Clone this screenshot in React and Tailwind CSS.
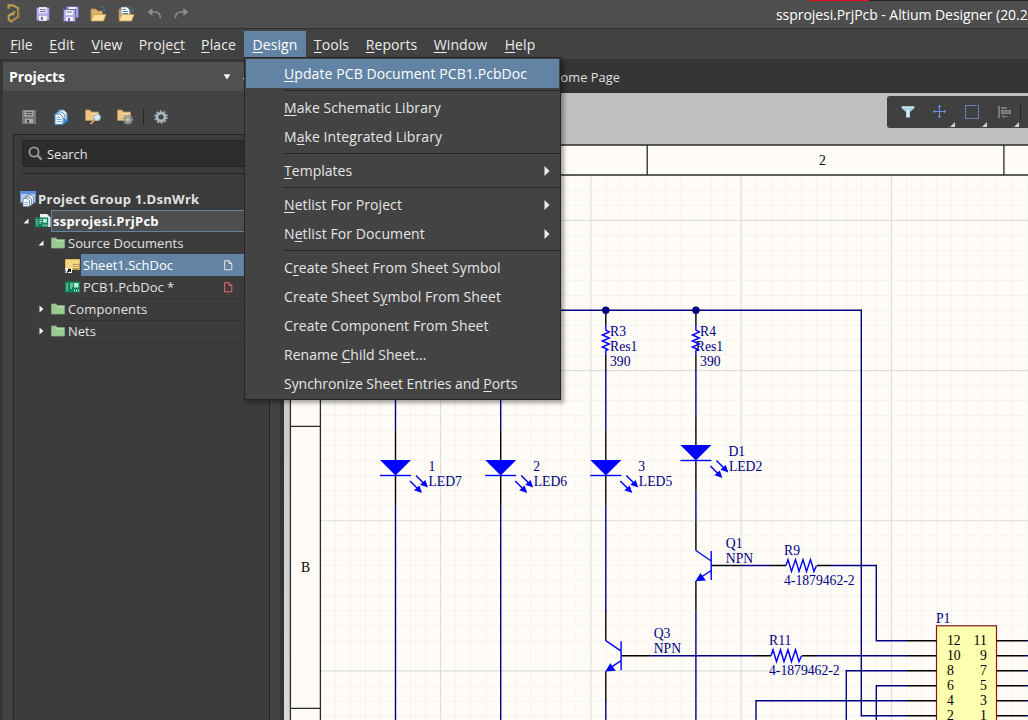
import React from "react";

const NAVY = "#000080";
const BLUE = "#0000ff";

/* A label with its keyboard mnemonic written as &X */
function Mnemonic({ text }) {
  const i = text.indexOf("&");
  if (i < 0) return text;
  return (
    <>
      {text.slice(0, i)}
      <span className="underline decoration-1 underline-offset-[2px]">{text[i + 1]}</span>
      {text.slice(i + 2)}
    </>
  );
}

function Floppy({ body, edge, className }) {
  return (
    <svg width="14" height="14" viewBox="0 0 14 14" className={className}>
      <rect x="0" y="0" width="14" height="14" fill={edge} />
      <rect x="1" y="1" width="12" height="12" fill={body} />
      <rect x="3" y="0" width="8" height="6" fill="#f2f2f6" />
      <rect x="4" y="2" width="6" height="1" fill={edge} />
      <rect x="4" y="4" width="6" height="1" fill={edge} />
      <rect x="3" y="9" width="8" height="5" fill="#f2f2f6" />
      <rect x="5" y="10" width="2" height="3" fill={edge} />
    </svg>
  );
}

function AltiumLogo() {
  return (
    <svg width="16" height="20" viewBox="0 0 16 20" fill="none">
      <path d="M2.6 4.6 V1.2 H7.4 L12.4 4.2 V13 L5.4 17.6 L2.8 15.8 V11.6 L9.4 7.6" stroke="#bb9b4e" strokeWidth="2.2" />
      <path d="M12.8 4.4 V13 L6 17.8" stroke="#8f7841" strokeWidth="1" />
      <path d="M3 10.6 H8.6" stroke="#bb9b4e" strokeWidth="1.6" />
    </svg>
  );
}

function SaveAll() {
  return (
    <svg width="16" height="16" viewBox="0 0 16 16">
      <rect x="3" y="0" width="13" height="12" fill="#6a66a4" />
      <rect x="4" y="1" width="11" height="10" fill="#a9a3dc" />
      <rect x="6" y="1" width="7" height="3" fill="#f2f2f6" />
      <rect x="0" y="3" width="13" height="13" fill="#6a66a4" />
      <rect x="1" y="4" width="11" height="11" fill="#b7b0e6" />
      <rect x="3" y="4" width="7" height="5" fill="#f2f2f6" />
      <rect x="4" y="5.5" width="5" height="1" fill="#6a66a4" />
      <rect x="3" y="11" width="7" height="4" fill="#f2f2f6" />
      <rect x="5" y="12" width="2" height="3" fill="#6a66a4" />
    </svg>
  );
}

function OpenFolder({ doc }) {
  return (
    <svg width="17" height="16" viewBox="0 0 17 16">
      <path d="M1 14 V3 H6 L7.5 5 H12.5 V9" fill="#d9b572" stroke="#a8813f" strokeWidth="0.8" />
      {doc && (
        <g>
          <path d="M3 10 V1 H9 L11.5 3.5 V10 Z" fill="#f4f7fb" stroke="#5d7ea6" strokeWidth="0.7" />
          <path d="M4.5 3.5 H8 M4.5 5.5 H10 M4.5 7.5 H10" stroke="#5d7ea6" strokeWidth="1" />
        </g>
      )}
      <path d="M1 15 L4 8.5 H16 L13.5 15 Z" fill="#fbdf9f" stroke="#c79a4d" strokeWidth="0.8" />
      <path d="M9.5 1.2 Q13 0 14.8 4" fill="none" stroke="#3f7196" strokeWidth="1.2" strokeDasharray="2.4 0.8" />
      <path d="M12.4 3.5 H16.6 L14.8 6 Z" fill="#3f7196" />
    </svg>
  );
}

function Undo({ className }) {
  return (
    <svg width="15" height="11" viewBox="0 0 15 11" className={className}>
      <path d="M5.5 0 V8 L0.5 4 Z" fill="#8b8b8b" />
      <path d="M4 4 H9 Q13.5 4.5 13.5 10" fill="none" stroke="#8b8b8b" strokeWidth="1.6" />
    </svg>
  );
}

function Gear({ size, className }) {
  return (
    <svg width={size} height={size} viewBox="0 0 14 14" className={className}>
      <circle cx="7" cy="7" r="5.9" fill="none" stroke="#9aa8b0" strokeWidth="1.8" strokeDasharray="2 1.7" />
      <circle cx="7" cy="7" r="3.9" fill="none" stroke="#a9b6bd" strokeWidth="2.8" />
      <circle cx="7" cy="7" r="2.2" fill="#434343" />
    </svg>
  );
}

function CopyDocs() {
  return (
    <svg width="15" height="16" viewBox="0 0 15 16">
      <path d="M5 1 H10 L13 4 V12 H5 Z" fill="#e8f2fb" stroke="#4f8fc6" />
      <path d="M3 3 H8 L11 6 V14 H3 Z" fill="#e8f2fb" stroke="#4f8fc6" />
      <path d="M1 5 H6 L9 8 V15.3 H1 Z" fill="#f5f9fd" stroke="#4f8fc6" />
      <path d="M2.5 8.5 H6 M2.5 10.5 H7.5 M2.5 12.5 H7.5" stroke="#78aee0" />
      <path d="M9.5 9 L14 12 L9.5 15.5 Z" fill="#2f87d8" />
    </svg>
  );
}

function ToolFolder({ gear }) {
  return (
    <svg width="17" height="16" viewBox="0 0 17 16">
      <path d="M0.5 11.5 V1 H5 L6.5 3 H13.5 V11.5 Z" fill="#eac583" stroke="#b8904e" strokeWidth="0.9" />
      <path d="M6 4.5 H13" stroke="#fbe3b4" />
      {gear ? (
        <g>
          <circle cx="10.8" cy="10.6" r="4.3" fill="none" stroke="#8d9ba3" strokeWidth="1.6" strokeDasharray="1.8 1" />
          <circle cx="10.8" cy="10.6" r="2.8" fill="#d8bc86" stroke="#8d9ba3" strokeWidth="1.8" />
        </g>
      ) : (
        <g>
          <path d="M9.8 10.5 L5.5 15" stroke="#c99a5a" strokeWidth="2" />
          <circle cx="12.2" cy="8.4" r="3.2" fill="#d7ebf7" stroke="#9ab7cb" strokeWidth="1" />
        </g>
      )}
    </svg>
  );
}

function Folder() {
  return (
    <svg width="14" height="12" viewBox="0 0 14 12" className="shrink-0">
      <path d="M0.5 11 V1 H5 L6.5 2.5 H13.5 V11 Z" fill="#9ccc94" stroke="#7fae78" strokeWidth="0.8" />
      <path d="M6 3.8 H13" stroke="#c0e2b8" />
    </svg>
  );
}

function Board({ page }) {
  return (
    <svg width="16" height="14" viewBox="0 0 16 14" className="shrink-0">
      {page && <path d="M5 0 H12 L15.5 3.5 V13 H5 Z" fill="#eceef6" />}
      <g transform={page ? "translate(0 3.5) scale(0.88)" : "translate(0 1.5)"}>
        <rect width="15" height="11" fill="#0b8457" />
        <path d="M1.5 2.5 H3 M1.5 4.5 H3 M1.5 6.5 H3 M1.5 8.5 H3 M5 2.5 H8 M5 4.5 H8 M5 6.5 H7" stroke="#d6f2e2" />
        <rect x="9" y="1.5" width="4.5" height="4.5" fill="#c4ead6" />
        <path d="M9.5 8 V10 M11.5 8 V10 M13.5 8 V10" stroke="#d6f2e2" />
      </g>
    </svg>
  );
}

function GroupIcon() {
  return (
    <svg width="17" height="16" viewBox="0 0 17 16" className="shrink-0">
      <rect x="0.5" y="0.5" width="15" height="11" fill="#b7cbe6" stroke="#5f84bb" />
      <rect x="0" y="0" width="16" height="3" fill="#5d8fe0" />
      <path d="M7 4 H11 L13.5 6 V13 H7 Z" fill="#e8edf5" stroke="#637a9c" strokeWidth="0.8" />
      <path d="M5 6 H9 L11.5 8 V14.5 H5 Z" fill="#eef2f8" stroke="#637a9c" strokeWidth="0.8" />
      <path d="M3 7.5 H7 L9.5 9.5 V15.5 H3 Z" fill="#f5f8fc" stroke="#637a9c" strokeWidth="0.8" />
      <path d="M4.5 11.5 H8 M4.5 13.5 H8" stroke="#7d95b5" strokeWidth="0.8" />
    </svg>
  );
}

function SheetIcon() {
  return (
    <svg width="16" height="16" viewBox="0 0 16 16" className="shrink-0">
      <rect x="0.5" y="2.5" width="14" height="10" fill="#f3d583" stroke="#dcb55c" />
      <rect x="8" y="7" width="7" height="6" fill="#b89548" />
      <path d="M8.5 8.5 H14 M8.5 10.5 H14" stroke="#fbe9b8" />
      <rect x="0.5" y="11" width="6.5" height="6" fill="#fff" />
      <path d="M2 15.5 L4.6 12.9 M3 12.5 H5.3 V15" stroke="#000" strokeWidth="1.3" fill="none" />
    </svg>
  );
}

function PageMark({ className }) {
  return (
    <svg width="9" height="11" viewBox="0 0 9 11" className={className}>
      <path d="M0.7 0.7 H5 L7.8 3.5 V9.8 H0.7 Z M5 0.7 V3.5 H7.8" fill="none" stroke="currentColor" strokeWidth="1" />
    </svg>
  );
}

function Expander({ open }) {
  return (
    <svg width="6" height="8" viewBox="0 0 6 8" className="shrink-0">
      {open ? <path d="M5.5 1.5 V6.5 H0.5 Z" fill="#f2f2f2" /> : <path d="M1.5 0.5 L5.5 4 L1.5 7.5 Z" fill="#f2f2f2" />}
    </svg>
  );
}

const designMenu = [
  { label: "&Update PCB Document PCB1.PcbDoc", active: true, fit: "tracking-[0.09px]" },
  null,
  { label: "&Make Schematic Library", fit: "tracking-[0.07px]" },
  { label: "M&ake Integrated Library", fit: "tracking-[0.07px]" },
  null,
  { label: "&Templates", sub: true, fit: "tracking-[0.03px]" },
  null,
  { label: "&Netlist For Project", sub: true, fit: "tracking-[0.08px]" },
  { label: "N&etlist For Document", sub: true, fit: "tracking-[0.09px]" },
  null,
  { label: "C&reate Sheet From Sheet Symbol", fit: "tracking-[0.09px]" },
  { label: "Create Sheet S&ymbol From Sheet", fit: "tracking-[0.1px]" },
  { label: "Create Component From Sheet", fit: "tracking-[0.08px]" },
  { label: "Rename &Child Sheet...", fit: "tracking-[0.02px]" },
  { label: "Synchronize Sheet Entries and &Ports", fit: "tracking-[-0.05px]" },
];

function DesignMenu() {
  return (
    <div className="absolute left-0 top-[26px] z-20 w-[317px] border border-[#252525] bg-[#434343] pb-px shadow-[3px_3px_4px_rgba(0,0,0,0.35)]">
      {designMenu.map((item, i) =>
        item ? (
          <div
            key={i}
            className={
              "ml-px mr-px flex h-[29px] items-center pl-[38px] pr-[9px] whitespace-nowrap " +
              (item.active ? "mt-px bg-[#6283a3] text-white" : "text-[#e6e6e6]")
            }
          >
            <span className={"grow " + item.fit}>
              <Mnemonic text={item.label} />
            </span>
            {item.sub && (
              <svg width="6" height="10" viewBox="0 0 6 10">
                <path d="M0.5 0 L5.5 5 L0.5 10 Z" fill="#ececec" />
              </svg>
            )}
          </div>
        ) : (
          <div key={i} className="ml-[39px] flex h-[5px] items-center">
            <div className="h-px w-full bg-[#232323]" />
          </div>
        )
      )}
    </div>
  );
}

const menus = [
  ["&File", "w-[39px]"],
  ["&Edit", "w-[42px]"],
  ["&View", "w-[48px]"],
  ["Proje&ct", "w-[62px]"],
  ["&Place", "w-[51px]"],
  ["&Design", "w-[62px]"],
  ["&Tools", "w-[51px]"],
  ["&Reports", "w-[69px]"],
  ["&Window", "w-[69px]"],
  ["&Help", "w-[50px]"],
];

function TitleBar() {
  return (
    <header className="flex h-[29px] shrink-0 items-center border-b border-[#2f2f2f] bg-[#4e4e4e] pl-[6px]">
      <AltiumLogo />
      <Floppy body="#b7b0e6" edge="#6a66a4" className="ml-[14px]" />
      <div className="ml-[13px]"><SaveAll /></div>
      <div className="ml-[11px]"><OpenFolder /></div>
      <div className="ml-[11px]"><OpenFolder doc /></div>
      <Undo className="ml-[12px] mt-[-2px]" />
      <Undo className="ml-[13px] mt-[-2px] -scale-x-100" />
      <div className="ml-[587px] h-full w-[252px] shrink-0 overflow-hidden">
        <div className="flex h-px">
          <div className="ml-[33px] w-[60px] bg-[#e81123]" />
          <div className="grow bg-[#262626]" />
        </div>
        <div className="flex h-[28px] items-center whitespace-nowrap text-[14px] tracking-[-0.06px] text-white">
          ssprojesi.PrjPcb - Altium Designer (20.2
        </div>
      </div>
    </header>
  );
}

function MenuBar() {
  return (
    <nav className="flex h-[30px] shrink-0 items-start bg-[#424242] pl-[2px] pt-[2px] text-[14px] text-[#ececec]">
      {menus.map(([label, width]) => {
        const open = label === "&Design";
        return (
          <div key={label} className={width + " relative h-[26px] " + (open ? "bg-[#6283a3] text-white" : "")}>
            <div className="flex h-[27px] items-center justify-center">
              <span className="tracking-[0.1px]">
                <Mnemonic text={label} />
              </span>
            </div>
            {open && <DesignMenu />}
          </div>
        );
      })}
    </nav>
  );
}

function ProjectsPanel() {
  return (
    <aside className="ml-[3px] flex w-[277px] shrink-0 flex-col bg-[#434343]">
      <div className="flex h-[29px] shrink-0 items-center bg-[#505050] pl-[6px]">
        <span className="w-[214px] pt-px text-[14px] font-bold tracking-[-0.08px] text-white">Projects</span>
        <svg width="8" height="6" viewBox="0 0 8 6">
          <path d="M0.5 0.3 H7.5 L4 5.5 Z" fill="#f4f4f4" />
        </svg>
        <span className="ml-[12px] mt-[3px] h-px w-[10px] bg-[#e5e5e5]" />
      </div>
      <div className="flex h-[43px] shrink-0 items-center pl-[19px] pt-[9px]">
        <svg width="14" height="14" viewBox="0 0 14 14">
          <rect width="14" height="14" fill="#8a8a8a" />
          <path d="M0 0 H2 V7 H12 V0 H14 V14 H0 Z" fill="#777" />
          <rect x="3" y="1" width="8" height="5" fill="#a6a6a6" />
          <path d="M4 2.5 H10 M4 4.5 H10" stroke="#555" />
          <rect x="3" y="9" width="8" height="4" fill="#aaa" />
          <rect x="5" y="10" width="2" height="3" fill="#444" />
        </svg>
        <div className="ml-[18px]"><CopyDocs /></div>
        <div className="ml-[16px]"><ToolFolder /></div>
        <div className="ml-[15px]"><ToolFolder gear /></div>
        <div className="ml-[9px] h-[16px] w-px bg-[#262626]" />
        <Gear size={14} className="ml-[10px]" />
      </div>
      <div className="ml-[10px] flex w-[257px] grow flex-col border-l border-r border-t border-[#252525] bg-[#3c3c3c]">
        <div className="ml-[8px] mt-[5px] flex h-[27px] items-center rounded-[3px] border border-[#242424] bg-[#2d2d2d] pl-[5px]">
          <svg width="15" height="15" viewBox="0 0 15 15">
            <circle cx="6" cy="6" r="4.6" fill="none" stroke="#9a9a9a" strokeWidth="1.8" />
            <path d="M9.3 9.3 L13.6 13.6" stroke="#9a9a9a" strokeWidth="2.2" />
          </svg>
          <span className="ml-[4px] pt-px text-[12.8px] text-[#e8e8e8]">Search</span>
        </div>
        <div className="ml-[8px] mt-[6px] h-px bg-[#242424]" />
        <div className="mt-[14px] text-[13px] text-[#e2e2e2]">
          <div className="flex h-[22px] items-center pl-[6px] font-bold">
            <GroupIcon />
            <span className="ml-px tracking-[0.28px]">Project Group 1.DsnWrk</span>
          </div>
          <div className="flex h-[22px] items-center pl-[9px] font-bold text-white">
            <Expander open />
            <div className="ml-[6px]"><Board page /></div>
            <div className="flex h-[22px] grow items-center border border-r-0 border-[#6283a3] bg-[#4e4e4e] pl-px">
              <span className="tracking-[0.24px]">ssprojesi.PrjPcb</span>
            </div>
          </div>
          <div className="flex h-[22px] items-center pl-[24px]">
            <Expander open />
            <div className="ml-[7px]"><Folder /></div>
            <span className="ml-[3px] tracking-[0.04px]">Source Documents</span>
          </div>
          <div className="flex h-[22px] items-center pl-[51px]">
            <SheetIcon />
            <div className="flex h-[22px] grow items-center bg-[#6283a3] pl-[2px] text-white">
              <span className="w-[141px]">Sheet1.SchDoc</span>
              <PageMark className="text-[#e8e8e8]" />
            </div>
          </div>
          <div className="flex h-[22px] items-center pl-[51px]">
            <Board />
            <div className="flex h-[22px] grow items-center pl-[2px] shadow-[0_1px_0_#343434]">
              <span className="w-[141px]">PCB1.PcbDoc *</span>
              <PageMark className="text-[#f06a6a]" />
            </div>
          </div>
          <div className="flex h-[22px] items-center pl-[24px]">
            <Expander />
            <div className="ml-[7px]"><Folder /></div>
            <div className="ml-[3px] flex h-[22px] grow items-center shadow-[0_1px_0_#343434]">
              <span className="tracking-[0.14px]">Components</span>
            </div>
          </div>
          <div className="flex h-[22px] items-center pl-[24px]">
            <Expander />
            <div className="ml-[7px]"><Folder /></div>
            <div className="ml-[3px] flex h-[22px] grow items-center shadow-[0_1px_0_#343434]">
              <span>Nets</span>
            </div>
          </div>
        </div>
      </div>
    </aside>
  );
}

/* Light emitting diode: x is the wire, y the cathode bar */
function Led({ x, y, name, type, dx = 32.5 }) {
  return (
    <g>
      <path d={`M${x} ${y - 45} V${y - 14} M${x} ${y} V${y + 30}`} stroke="#000" />
      <path d={`M${x - 15.5} ${y - 15.5} H${x + 15.5} L${x} ${y} Z`} fill={BLUE} />
      <path d={`M${x - 15.5} ${y} H${x + 15.5}`} stroke={BLUE} />
      {[[14.5, 5.5], [20.5, 0]].map(([ax, ay]) => (
        <g key={ax} transform={`translate(${x + ax} ${y + ay})`}>
          <path d="M0 0 L8 8" stroke={BLUE} strokeWidth="1.5" />
          <path d="M12 12 L4 9.2 L9.4 4.4 Z" fill={BLUE} />
        </g>
      ))}
      <Label x={x + dx} y={y - 5} text={name} />
      <Label x={x + 33} y={y + 10.5} text={type} />
    </g>
  );
}

function Label({ x, y, text, color = NAVY, anchor = "start" }) {
  return (
    <text x={x} y={y} fill={color} stroke="none" textAnchor={anchor} className="font-['Liberation_Serif',serif] text-[13.7px]">
      {text}
    </text>
  );
}

function Npn({ x, y, name, lx }) {
  return (
    <g>
      <path d={`M${x} ${y - 45} V${y - 15} M${x} ${y + 15.5} V${y + 46} M${x + 15.5} ${y} H${x + 45}`} stroke="#000" />
      <path d={`M${x} ${y - 15} L${x + 15.3} ${y - 4.5} M${x + 15.3} ${y - 14.5} V${y + 14.5} M${x + 15.3} ${y + 5} L${x + 4} ${y + 12.5}`} stroke={BLUE} />
      <path d={`M${x - 0.5} ${y + 15.8} L${x + 4.5} ${y + 7.5} L${x + 10} ${y + 15} Z`} fill={BLUE} />
      <Label x={lx} y={y - 17.5} text={name} />
      <Label x={lx} y={y - 2.5} text="NPN" />
    </g>
  );
}

function ResV({ x, name, tx }) {
  return (
    <g>
      <path d={`M${x} 310 V325 M${x} 355 V370`} stroke="#000" />
      <path
        d={`M${x} 325 V330 L${x + 3.5} 332 L${x - 3.5} 335 L${x + 3.5} 338 L${x - 3.5} 341 L${x + 3.5} 344 L${x - 3.5} 347 L${x + 2} 349.5 L${x} 350.5 V355`}
        stroke={BLUE}
      />
      <circle cx={x} cy="310.3" r="3.7" fill={NAVY} />
      <Label x={x + 4.2} y="336" text={name} />
      <Label x={tx} y="351" text="Res1" />
      <Label x={x + 4.2} y="366" text="390" />
    </g>
  );
}

function ResH({ x, y, name }) {
  return (
    <g>
      <path d={`M${x - 15} ${y} H${x} M${x + 31} ${y} H${x + 45}`} stroke="#000" />
      <path
        d={`M${x} ${y} L${x + 2} ${y - 6} L${x + 5.5} ${y + 6} L${x + 9.5} ${y - 6} L${x + 13} ${y + 6} L${x + 17} ${y - 6} L${x + 20.5} ${y + 6} L${x + 24.5} ${y - 6} L${x + 28} ${y + 6} L${x + 30.5} ${y}`}
        stroke={BLUE}
      />
      <Label x={x - 2} y={y - 10.5} text={name} />
      <Label x={x - 2} y={y + 19.5} text="4-1879462-2" />
    </g>
  );
}

const rows = [640.7, 655.7, 670.7, 685.7, 700.7, 715.7];
const minor = Array.from({ length: 50 }, (_, i) => i);

function Schematic() {
  return (
    <svg width="744" height="627" viewBox="284 93 744 627" fill="none" strokeWidth="1.4" className="block">
      <rect x="290" y="145" width="740" height="580" fill="#fffcf7" />
      <g>
        {minor.map((i) => (
          <path key={i} d={`M${335.4 + i * 15.03} 176 V720`} stroke={(i - 7) % 10 === 0 ? "#dcdedb" : "#f3f3f1"} strokeWidth={(i - 7) % 10 === 0 ? 1.2 : 1} />
        ))}
        {minor.map((i) => (
          <path key={i} d={`M321 ${190.3 + i * 15.02} H1028`} stroke={(i - 2) % 10 === 0 ? "#dcdedb" : "#f3f3f1"} strokeWidth={(i - 2) % 10 === 0 ? 1.2 : 1} />
        ))}
      </g>
      <g stroke="#2a2a2a" strokeWidth="1.3">
        <path d="M290.4 720 V145 H1028 M320.4 720 V175 H1028" />
        <path d="M647.2 145 V175 M1003.9 145 V175 M290 426.4 H320.4 M290 708.4 H320.4" />
      </g>
      <Label x="822.5" y="165" text="2" color="#000" anchor="middle" />
      <Label x="305.5" y="571.5" text="B" color="#000" anchor="middle" />

      {/* wires stop where component leads and bodies begin */}
      <g stroke={NAVY}>
        <path d="M395.5 390 V430.5 M395.5 505.5 V720 M500.7 390 V430.5 M500.7 505.5 V720" />
        <path d="M605.8 370 V430.5 M605.8 505.5 V611 M605.8 701.5 V720" />
        <path d="M695.9 370 V415.5 M695.9 490.5 V520.5 M695.9 611.5 V720" />
        <path d="M500 310.3 H861.3 V715.7 H907" />
        <path d="M741 565.5 H771 M831 565.5 H876.3 V640.7 H907" />
        <path d="M651 655.7 H756 M816 655.7 H907" />
        <path d="M846.3 720 V670.7 H907 M876.3 720 V685.7 H907 M756 720 V700.7 H907" />
      </g>
      <ResV x={605.8} name="R3" tx={610} />
      <ResV x={695.9} name="R4" tx={695.8} />
      <Led x={395.5} y={475.5} name="1" type="LED7" dx={33} />
      <Led x={500.7} y={475.5} name="2" type="LED6" />
      <Led x={605.8} y={475.5} name="3" type="LED5" />
      <Led x={695.9} y={460.5} name="D1" type="LED2" />
      <Npn x={695.9} y={565.5} name="Q1" lx={725.8} />
      <Npn x={605.8} y={655.7} name="Q3" lx={653.7} />
      <ResH x={786} y={565.5} name="R9" />
      <ResH x={771} y={655.7} name="R11" />

      <rect x="936.5" y="625.8" width="60" height="110" fill="#ffffb0" stroke="#8a1414" strokeWidth="1.2" />
      <Label x="936" y="622.5" text="P1" />
      {rows.map((y, i) => (
        <g key={y}>
          <path d={`M907 ${y} H936.5 M996.5 ${y} H1026`} stroke="#000" />
          <path d={`M1026 ${y} H1028`} stroke={NAVY} />
          <Label x="947" y={y + 4.5} text={String(12 - i * 2)} color="#000" />
          <Label x="986.8" y={y + 4.5} text={String(11 - i * 2)} color="#000" anchor="end" />
        </g>
      ))}
    </svg>
  );
}

function Corner() {
  return (
    <svg width="5" height="5" viewBox="0 0 5 5" className="absolute bottom-[1px] right-[1px]">
      <path d="M5 0 V5 H0 Z" fill="#d4d4d4" />
    </svg>
  );
}

function ActiveBar() {
  return (
    <div className="absolute right-0 top-[3px] flex h-[32px] w-[141px] items-center rounded-l-[3px] bg-[#404040]">
      <div className="ml-[8px] flex h-[32px] w-[29px] items-center justify-center">
        <svg width="14" height="12" viewBox="0 0 14 12" className="ml-[-4px]">
          <path d="M0.5 0.5 H13.5 V2 L9 6 V11.5 H5 V6 L0.5 2 Z" fill="#a8d4e6" />
          <path d="M1 1 H13" stroke="#dff2f9" />
          <path d="M7 3 V11" stroke="#e6f6fb" strokeWidth="1.4" />
        </svg>
      </div>
      <div className="relative flex h-[32px] w-[32px] items-center justify-center">
        <svg width="14" height="14" viewBox="0 0 14 14" stroke="#6d8fe0" fill="none">
          <path d="M6.5 0 V13 M0 6.5 H13 M5 1.5 H8 M5 11.5 H8 M1.5 5 V8 M11.5 5 V8" />
        </svg>
        <Corner />
      </div>
      <div className="relative flex h-[32px] w-[32px] items-center justify-center">
        <svg width="14" height="14" viewBox="0 0 14 14">
          <rect x="0.5" y="0.5" width="13" height="13" fill="none" stroke="#7b9bf0" strokeDasharray="2 1" />
        </svg>
        <Corner />
      </div>
      <div className="relative flex h-[32px] w-[32px] items-center justify-center">
        <svg width="13" height="13" viewBox="0 0 13 13">
          <rect x="0" y="0" width="2" height="12" fill="#7b7b7b" />
          <rect x="3" y="1" width="6" height="2" fill="#7b7b7b" />
          <rect x="3.5" y="4.5" width="9" height="3" fill="#6d6d6d" stroke="#8b8b8b" />
          <path d="M4 10.5 H10 M6 9 L4 10.5 L6 12" fill="none" stroke="#7b7b7b" />
        </svg>
        <Corner />
      </div>
      <div className="h-[16px] w-px bg-[#242424]" />
    </div>
  );
}

export default function App() {
  return (
    <div className="flex h-[720px] w-[1028px] flex-col overflow-hidden bg-[#353535] font-['Open_Sans','Noto_Sans',sans-serif] leading-none">
      <TitleBar />
      <MenuBar />
      <main className="flex min-h-0 grow">
        <div className="flex pt-[3px]">
          <ProjectsPanel />
        </div>
        <section className="ml-[4px] flex w-[744px] shrink-0 flex-col">
          <div className="flex h-[34px] shrink-0 items-center pl-[267px] pt-[3px] text-[12.8px] tracking-[0.05px] text-[#e0e0e0]">Home Page</div>
          <div className="relative grow bg-linear-to-b from-[#bfbfbf] to-[#d8d8d8]">
            <Schematic />
            <ActiveBar />
          </div>
        </section>
      </main>
    </div>
  );
}
